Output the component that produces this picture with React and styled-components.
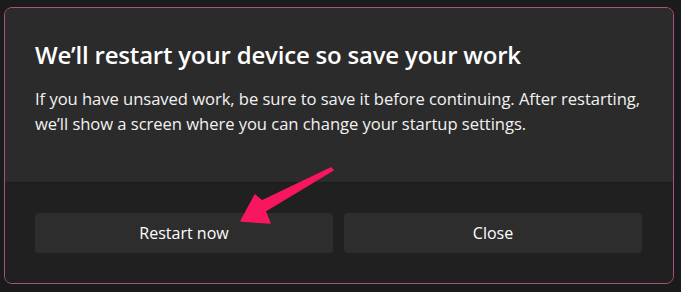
import React from "react";
import styled, { createGlobalStyle } from "styled-components";

const GlobalStyle = createGlobalStyle`
  html, body {
    margin: 0;
    padding: 0;
    background: #1b1b1c;
  }
  body {
    font-family: "Open Sans", "Noto Sans", sans-serif;
    color: #ffffff;
  }
`;

const Page = styled.div`
  position: relative;
  width: 681px;
  height: 292px;
  padding: 7px 0 0 4px;
  box-sizing: border-box;
`;

const Dialog = styled.div`
  width: 670px;
  height: 277px;
  box-sizing: border-box;
  border: 1px solid #a45382;
  border-radius: 8px;
  overflow: hidden;
  display: flex;
  flex-direction: column;
  background: #2b2b2b;
`;

const Content = styled.div`
  flex: 1;
  padding: 31px 10px 0 30px;
  background: #2b2b2b;
  border-bottom: 1px solid #1d1d1d;
`;

const Title = styled.h1`
  margin: 0 0 15px;
  font-size: 24px;
  font-weight: 600;
  line-height: 32px;
  letter-spacing: -0.2px;
  color: #ffffff;
`;

const Body = styled.p`
  margin: 0;
  font-size: 16.6px;
  line-height: 25px;
  letter-spacing: -0.05px;
  white-space: nowrap;
  color: #f2f2f2;
`;

const Footer = styled.div`
  height: 100px;
  box-sizing: border-box;
  padding: 30px 31px 30px 30px;
  background: #202020;
  display: grid;
  grid-template-columns: 1fr 1fr;
  gap: 11px;
`;

const Button = styled.button`
  height: 40px;
  border: none;
  border-radius: 4px;
  background: #2d2d2d;
  color: #ffffff;
  font-family: inherit;
  font-size: 16px;
  cursor: pointer;
`;

const Arrow = styled.svg`
  position: absolute;
  left: 0;
  top: 0;
  pointer-events: none;
`;

export default function App() {
  return (
    <Page>
      <GlobalStyle />
      <Dialog>
        <Content>
          <Title>We’ll restart your device so save your work</Title>
          <Body>
            If you have unsaved work, be sure to save it before continuing. After restarting,
            <br />
            we’ll show a screen where you can change your startup settings.
          </Body>
        </Content>
        <Footer>
          <Button>Restart now</Button>
          <Button>Close</Button>
        </Footer>
      </Dialog>
      <Arrow width="681" height="292" viewBox="0 0 681 292">
        <path
          d="M333 170 L331 168 L262 201 L255 195 L241 221 L270 223 L265 211 Z"
          fill="#f7175f"
          stroke="#f7175f"
          strokeWidth="1.5"
          strokeLinejoin="round"
        />
      </Arrow>
    </Page>
  );
}
